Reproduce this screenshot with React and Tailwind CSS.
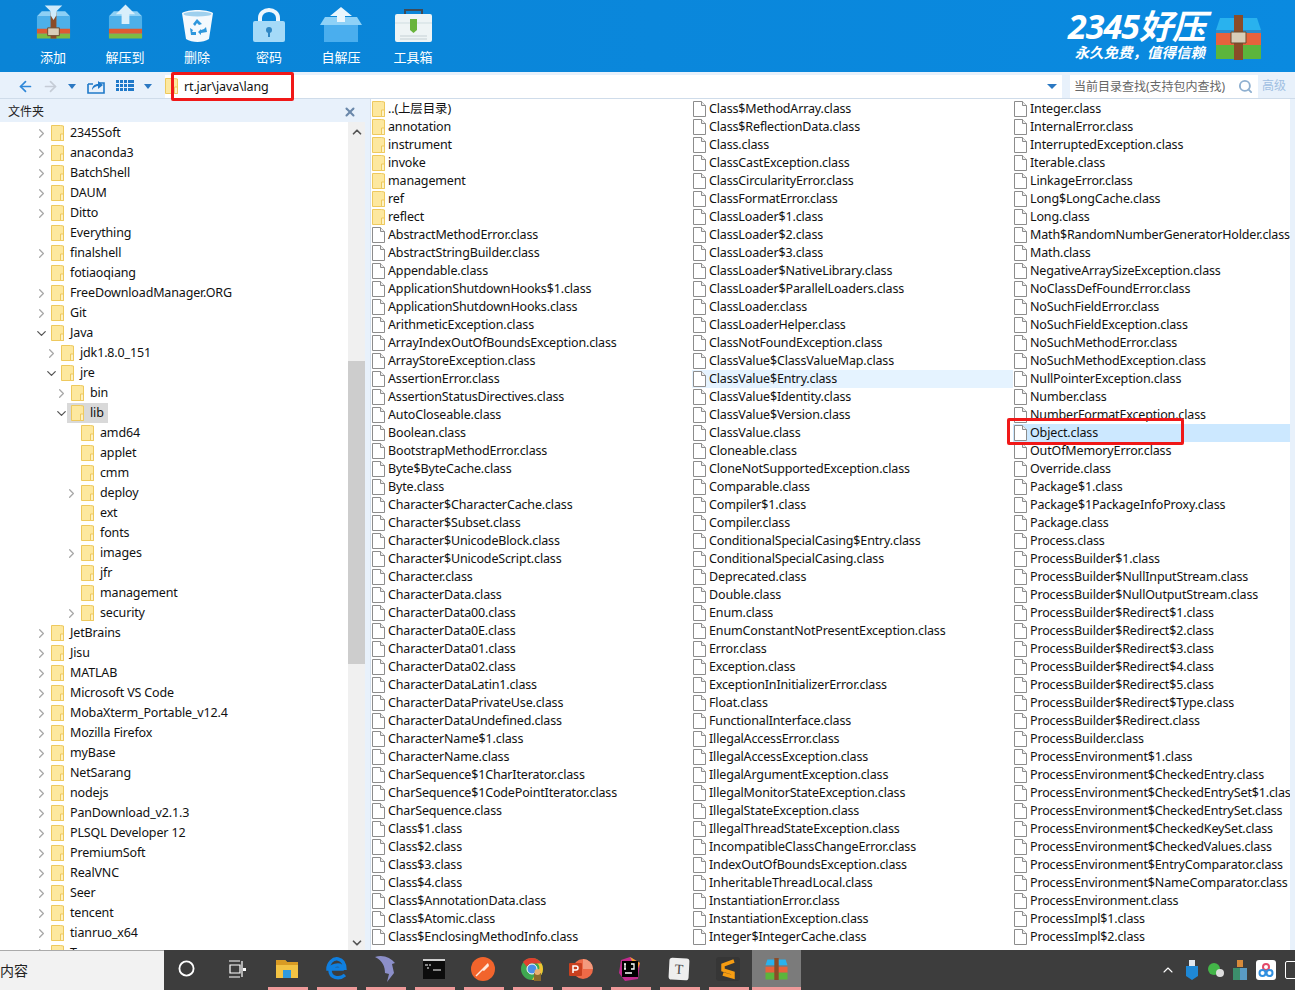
import React from 'react';
import { ChevronRight, ChevronDown, ChevronUp, X, Search, ArrowLeft, ArrowRight, Circle } from 'lucide-react';

const tree = [
  ['2345Soft', 0, 'r'], ['anaconda3', 0, 'r'], ['BatchShell', 0, 'r'], ['DAUM', 0, 'r'], ['Ditto', 0, 'r'],
  ['Everything', 0, ''], ['finalshell', 0, 'r'], ['fotiaoqiang', 0, ''], ['FreeDownloadManager.ORG', 0, 'r'],
  ['Git', 0, 'r'], ['Java', 0, 'd'], ['jdk1.8.0_151', 1, 'r'], ['jre', 1, 'd'], ['bin', 2, 'r'], ['lib', 2, 'd'],
  ['amd64', 3, ''], ['applet', 3, ''], ['cmm', 3, ''], ['deploy', 3, 'r'], ['ext', 3, ''], ['fonts', 3, ''],
  ['images', 3, 'r'], ['jfr', 3, ''], ['management', 3, ''], ['security', 3, 'r'], ['JetBrains', 0, 'r'],
  ['Jisu', 0, 'r'], ['MATLAB', 0, 'r'], ['Microsoft VS Code', 0, 'r'], ['MobaXterm_Portable_v12.4', 0, 'r'],
  ['Mozilla Firefox', 0, 'r'], ['myBase', 0, 'r'], ['NetSarang', 0, 'r'], ['nodejs', 0, 'r'],
  ['PanDownload_v2.1.3', 0, 'r'], ['PLSQL Developer 12', 0, 'r'], ['PremiumSoft', 0, 'r'], ['RealVNC', 0, 'r'],
  ['Seer', 0, 'r'], ['tencent', 0, 'r'], ['tianruo_x64', 0, 'r'], ['T', 0, 'r'],
];

const folders = ['..(上层目录)', 'annotation', 'instrument', 'invoke', 'management', 'ref', 'reflect'];

const col1 = [
  'AbstractMethodError.class', 'AbstractStringBuilder.class', 'Appendable.class', 'ApplicationShutdownHooks$1.class',
  'ApplicationShutdownHooks.class', 'ArithmeticException.class', 'ArrayIndexOutOfBoundsException.class',
  'ArrayStoreException.class', 'AssertionError.class', 'AssertionStatusDirectives.class', 'AutoCloseable.class',
  'Boolean.class', 'BootstrapMethodError.class', 'Byte$ByteCache.class', 'Byte.class', 'Character$CharacterCache.class',
  'Character$Subset.class', 'Character$UnicodeBlock.class', 'Character$UnicodeScript.class', 'Character.class',
  'CharacterData.class', 'CharacterData00.class', 'CharacterData0E.class', 'CharacterData01.class',
  'CharacterData02.class', 'CharacterDataLatin1.class', 'CharacterDataPrivateUse.class', 'CharacterDataUndefined.class',
  'CharacterName$1.class', 'CharacterName.class', 'CharSequence$1CharIterator.class',
  'CharSequence$1CodePointIterator.class', 'CharSequence.class', 'Class$1.class', 'Class$2.class', 'Class$3.class',
  'Class$4.class', 'Class$AnnotationData.class', 'Class$Atomic.class', 'Class$EnclosingMethodInfo.class',
];

const col2 = [
  'Class$MethodArray.class', 'Class$ReflectionData.class', 'Class.class', 'ClassCastException.class',
  'ClassCircularityError.class', 'ClassFormatError.class', 'ClassLoader$1.class', 'ClassLoader$2.class',
  'ClassLoader$3.class', 'ClassLoader$NativeLibrary.class', 'ClassLoader$ParallelLoaders.class', 'ClassLoader.class',
  'ClassLoaderHelper.class', 'ClassNotFoundException.class', 'ClassValue$ClassValueMap.class', 'ClassValue$Entry.class',
  'ClassValue$Identity.class', 'ClassValue$Version.class', 'ClassValue.class', 'Cloneable.class',
  'CloneNotSupportedException.class', 'Comparable.class', 'Compiler$1.class', 'Compiler.class',
  'ConditionalSpecialCasing$Entry.class', 'ConditionalSpecialCasing.class', 'Deprecated.class', 'Double.class',
  'Enum.class', 'EnumConstantNotPresentException.class', 'Error.class', 'Exception.class',
  'ExceptionInInitializerError.class', 'Float.class', 'FunctionalInterface.class', 'IllegalAccessError.class',
  'IllegalAccessException.class', 'IllegalArgumentException.class', 'IllegalMonitorStateException.class',
  'IllegalStateException.class', 'IllegalThreadStateException.class', 'IncompatibleClassChangeError.class',
  'IndexOutOfBoundsException.class', 'InheritableThreadLocal.class', 'InstantiationError.class',
  'InstantiationException.class', 'Integer$IntegerCache.class',
];

const col3 = [
  'Integer.class', 'InternalError.class', 'InterruptedException.class', 'Iterable.class', 'LinkageError.class',
  'Long$LongCache.class', 'Long.class', 'Math$RandomNumberGeneratorHolder.class', 'Math.class',
  'NegativeArraySizeException.class', 'NoClassDefFoundError.class', 'NoSuchFieldError.class',
  'NoSuchFieldException.class', 'NoSuchMethodError.class', 'NoSuchMethodException.class', 'NullPointerException.class',
  'Number.class', 'NumberFormatException.class', 'Object.class', 'OutOfMemoryError.class', 'Override.class',
  'Package$1.class', 'Package$1PackageInfoProxy.class', 'Package.class', 'Process.class', 'ProcessBuilder$1.class',
  'ProcessBuilder$NullInputStream.class', 'ProcessBuilder$NullOutputStream.class', 'ProcessBuilder$Redirect$1.class',
  'ProcessBuilder$Redirect$2.class', 'ProcessBuilder$Redirect$3.class', 'ProcessBuilder$Redirect$4.class',
  'ProcessBuilder$Redirect$5.class', 'ProcessBuilder$Redirect$Type.class', 'ProcessBuilder$Redirect.class',
  'ProcessBuilder.class', 'ProcessEnvironment$1.class', 'ProcessEnvironment$CheckedEntry.class',
  'ProcessEnvironment$CheckedEntrySet$1.class', 'ProcessEnvironment$CheckedEntrySet.class',
  'ProcessEnvironment$CheckedKeySet.class', 'ProcessEnvironment$CheckedValues.class',
  'ProcessEnvironment$EntryComparator.class', 'ProcessEnvironment$NameComparator.class', 'ProcessEnvironment.class',
  'ProcessImpl$1.class', 'ProcessImpl$2.class',
];

const treeIndent = ['pl-[34px]', 'pl-[44px]', 'pl-[54px]', 'pl-[64px]'];

function FolderIcon() {
  return (
    <svg width="13" height="16" viewBox="0 0 13 16" className="shrink-0">
      <path d="M.5.5h9l3 .5v14.500H.5z" fill="#fde89f" stroke="#eec95e" />
      <path d="M9.500 9h3v6.500h-3z" fill="#fdf1c4" stroke="#eec95e" />
    </svg>
  );
}

function FileIcon() {
  return (
    <svg width="13" height="16" viewBox="0 0 13 16" className="shrink-0">
      <path d="M.5.5h8l4 4v11H.5z" fill="#fff" stroke="#8c8c8c" />
      <path d="M8.500.5v4h4" fill="#eee" stroke="#8c8c8c" />
    </svg>
  );
}

function TreeRow({ name, depth, arrow }) {
  const selected = name === 'lib';
  return (
    <div className={`h-5 flex items-center shrink-0 ${treeIndent[depth]}`}>
      <div className="w-[17px] flex items-center shrink-0">
        {arrow === 'r' && <ChevronRight size={15} strokeWidth={2} className="text-[#a8a8a8]" />}
        {arrow === 'd' && <ChevronDown size={15} strokeWidth={2} className="text-[#555]" />}
      </div>
      <div className={`flex items-center h-5 pl-1 pr-1 -ml-1 ${selected ? 'bg-[#d9d9d9]' : ''}`}>
        <FolderIcon />
        <span className="ml-[6px] text-[#111] whitespace-nowrap">{name}</span>
      </div>
    </div>
  );
}

function ListRow({ name, folder, bg }) {
  return (
    <div className={`h-[18px] flex items-center pl-[1px] shrink-0 ${bg || ''}`}>
      <div className="w-[16px] flex items-center shrink-0">{folder ? <FolderIcon /> : <FileIcon />}</div>
      <span className="whitespace-nowrap text-[#111]">{name}</span>
    </div>
  );
}

function TopItem({ label, children }) {
  return (
    <div className="w-[72px] flex flex-col items-center">
      <div className="h-[40px] flex items-end">{children}</div>
      <span className="text-white text-[13px] tracking-normal mt-[6px] leading-[18px]">{label}</span>
    </div>
  );
}

function WrapIcon({ arrow }) {
  return (
    <svg width="37" height="38" viewBox="0 0 38 38">
      <path d="M2 12h34v21H2z" fill="#4db0ea" />
      <path d="M2 12l5-5h24l5 5z" fill="#8dd0f5" />
      <path d="M2 25h34v5H2z" fill="#dd5a32" />
      <path d="M2 30h34v5H2z" fill="#7dbb42" />
      {arrow === 'down' && <path d="M16 8h6v27h-6z" fill="#8a4c28" />}
      {arrow === 'down' && <path d="M13 24h12v8H13z" fill="#d8cdb8" stroke="#6b4a2e" />}
      {arrow === 'down' && <path d="M10 1h18l-6 6v4l-3 5-3-5V7z" fill="#cfeafa" />}
      {arrow === 'up' && <path d="M19 0l10 10h-6v10h-8V10H9z" fill="#d8effb" />}
    </svg>
  );
}

function Trash() {
  return (
    <svg width="33" height="32" viewBox="0 0 33 32">
      <path d="M1 3c6-4 25-4 31 0l-4 26c-6 4-17 4-23 0z" fill="#f4f9fd" />
      <ellipse cx="16.500" cy="4" rx="14" ry="2.500" fill="#9fd0ee" />
      <path d="M12 14l4-5 5 5-3 1-2-2-2 3zM25 17l1 5-6 1v2l-3-3 3-3v1l3-1zM9 18l3 2-1 2h4v3h-5z" fill="#2f97dc" />
    </svg>
  );
}

function Lock() {
  return (
    <svg width="32" height="34" viewBox="0 0 32 34">
      <path d="M7 14V10a9 8 0 0 1 18 0v4" fill="none" stroke="#eef7fd" strokeWidth="4" />
      <rect x="0" y="13" width="32" height="21" rx="2" fill="#a5daf8" />
      <circle cx="16" cy="22" r="3" fill="#2f87c4" />
      <path d="M15 23h2v6h-2z" fill="#2f87c4" />
    </svg>
  );
}

function BoxIcon() {
  return (
    <svg width="42" height="35" viewBox="0 0 42 35">
      <path d="M4 12h34v23H4z" fill="#4aaeee" />
      <path d="M0 18l5-8h32l5 8z" fill="#8ed1f7" />
      <path d="M21 0l11 9h-7v6h-8V9h-7z" fill="#eaf6fd" />
    </svg>
  );
}

function ToolBox() {
  return (
    <svg width="37" height="33" viewBox="0 0 37 33">
      <path d="M10 6V1h17v5" fill="none" stroke="#3e4a56" strokeWidth="2" />
      <rect x="0" y="5" width="37" height="28" rx="2" fill="#eef4f5" />
      <path d="M0 14h37" stroke="#cfdde0" />
      <path d="M15 10h7v11l-3.500 3-3.500-3z" fill="#69b43c" />
      <path d="M5 27h27M5 30h27" stroke="#c5d0d4" />
    </svg>
  );
}

function Dolphin() {
  return (
    <svg width="22" height="28" viewBox="0 0 22 28">
      <path d="M1 2c8-3 16 1 20 6l-3 1 2 9-7 9 2-8-4-1C11 12 9 6 1 2z" fill="#8c8fc9" />
    </svg>
  );
}

function TaskApp({ children, marked, active }) {
  return (
    <div className={`w-[49px] h-full flex flex-col shrink-0 ${active ? 'bg-[#7b7b7b]' : ''}`}>
      <div className="flex-1 flex items-center justify-center">{children}</div>
      <div className={`h-[3px] ${active ? '' : 'ml-[6px] mr-[3px]'} ${marked ? 'bg-[#ef9a9a]' : ''}`} />
    </div>
  );
}

export default function App() {
  return (
    <div className="relative w-[1295px] h-[990px] overflow-hidden flex flex-col bg-[#e8f1fb] text-[12.5px] tracking-[-0.15px] font-['Noto_Sans','Noto_Sans_CJK_SC',sans-serif]">
      {/* 顶部工具栏 */}
      <div className="h-[72px] shrink-0 flex items-start pt-[2px] pl-[17px] pr-[33px] bg-gradient-to-r from-[#0a84d6] to-[#0a8ae0]">
        <div className="flex">
          <TopItem label="添加"><WrapIcon arrow="down" /></TopItem>
          <TopItem label="解压到"><WrapIcon arrow="up" /></TopItem>
          <TopItem label="删除"><Trash /></TopItem>
          <TopItem label="密码"><Lock /></TopItem>
          <TopItem label="自解压"><BoxIcon /></TopItem>
          <TopItem label="工具箱"><ToolBox /></TopItem>
        </div>
        <div className="ml-auto flex items-center mt-[7px]">
          <div className="flex flex-col items-end italic font-bold text-white mr-[10px]">
            <span className="text-[34px] leading-[34px] tracking-[-1px]">2345好压</span>
            <span className="text-[14.500px] leading-[18px] tracking-normal">永久免费，值得信赖</span>
          </div>
          <svg width="47" height="47" viewBox="0 0 47 47" className="mt-[4px]">
            <path d="M5 4h37l4 12H1z" fill="#29b2ee" />
            <path d="M1 16h45v3H1z" fill="#2a8ccc" />
            <path d="M1 19h45v12H1z" fill="#e8623c" />
            <path d="M1 31h45v14H1z" fill="#5cb53c" />
            <path d="M19 1h9v45h-9z" fill="#8a4c28" />
            <path d="M16 18h15v11H16z" fill="#d8cdb8" stroke="#6b4a2e" />
          </svg>
        </div>
      </div>

      {/* 地址栏 */}
      <div className="h-[27px] shrink-0 flex items-center pt-[2px] border-b border-[#cfdcea]">
        <div className="w-[165px] flex items-center shrink-0 pl-[17px] text-[#2f87d8]">
          <ArrowLeft size={17} strokeWidth={2.4} />
          <ArrowRight size={17} strokeWidth={2.4} className="ml-[8px] text-[#c5ccd6]" />
          <div className="ml-[9px] border-x-[4px] border-t-[5px] border-x-transparent border-t-[#2b78c2]" />
          <svg width="20" height="16" viewBox="0 0 20 16" className="ml-[10px]">
            <path d="M2 6v9h16V5h-5M2 6h5" fill="none" stroke="#1f79c9" strokeWidth="1.6" />
            <path d="M6 12c0-4 3-6 6-6V3l5 4-5 4V8c-2 0-4 1-6 4z" fill="#1f79c9" />
          </svg>
          <svg width="18" height="12" viewBox="0 0 18 12" className="ml-[10px]" fill="#1f79c9">
            <path d="M0 0h3v3H0zM4 0h3v3H4zM8 0h3v3H8zM12 0h6v3h-6zM0 4h3v3H0zM4 4h3v3H4zM8 4h3v3H8zM12 4h6v3h-6zM0 8h3v3H0zM4 8h3v3H4zM8 8h3v3H8zM12 8h6v3h-6z" />
          </svg>
          <div className="ml-[10px] border-x-[4px] border-t-[5px] border-x-transparent border-t-[#2b78c2]" />
        </div>
        <div className="w-[897px] h-[23px] bg-white flex items-center shrink-0">
          <FolderIcon />
          <span className="ml-[6px] mt-[2px] text-[#111]">rt.jar\java\lang</span>
          <div className="ml-auto mr-[5px] border-x-[5px] border-t-[5px] border-x-transparent border-t-[#2b78c2]" />
        </div>
        <div className="ml-[8px] w-[188px] h-[23px] bg-white flex items-center justify-between shrink-0 pl-[4px] pr-[5px]">
          <span className="text-[#666] text-[12px] mt-[1px] tracking-normal whitespace-nowrap">当前目录查找(支持包内查找)</span>
          <Search size={15} strokeWidth={3} className="text-[#8fb0d0]" />
        </div>
        <span className="ml-[4px] text-[12px] tracking-normal text-[#a0bfe2]">高级</span>
      </div>

      {/* 主体 */}
      <div className="flex-1 min-h-0 flex">
        <div className="w-[365px] shrink-0 flex flex-col">
          <div className="h-[23px] shrink-0 flex items-center justify-between pt-[3px] pl-[8px] pr-[7px] bg-[#e8f1fb]">
            <span className="text-[#222] text-[12px] tracking-normal">文件夹</span>
            <X size={14} strokeWidth={3.500} className="text-[#6a88aa] mr-[1px]" />
          </div>
          <div className="flex-1 min-h-0 flex">
            <div className="w-[348px] bg-white overflow-hidden pt-[1px] flex flex-col">
              {tree.map(([name, depth, arrow]) => (
                <TreeRow key={name} name={name} depth={depth} arrow={arrow} />
              ))}
            </div>
            <div className="w-[17px] bg-[#f0f0f0] flex flex-col items-center">
              <ChevronUp size={14} strokeWidth={3} className="text-[#555] mt-[3px]" />
              <div className="w-full h-[303px] mt-[222px] bg-[#cdcdcd]" />
              <ChevronDown size={14} strokeWidth={3} className="text-[#555] mt-auto" />
            </div>
          </div>
        </div>
        <div className="w-[5px] shrink-0" />
        <div className="w-[920px] shrink-0 bg-white border-l border-[#d5e1ee] overflow-hidden pt-[1px] grid grid-cols-[321px_321px_277px]">
          <div className="overflow-hidden flex flex-col">
            {folders.map((f) => <ListRow key={f} name={f} folder />)}
            {col1.map((f) => <ListRow key={f} name={f} />)}
          </div>
          <div className="overflow-hidden flex flex-col">
            {col2.map((f) => (
              <ListRow key={f} name={f} bg={f === 'ClassValue$Entry.class' ? 'bg-[#e5f3ff]' : ''} />
            ))}
          </div>
          <div className="overflow-hidden flex flex-col">
            {col3.map((f) => (
              <ListRow key={f} name={f} bg={f === 'Object.class' ? 'bg-[#cce8ff]' : ''} />
            ))}
          </div>
        </div>
      </div>

      {/* 任务栏 */}
      <div className="h-10 shrink-0 flex bg-[#3d3d3d] relative">
        <div className="w-[164px] shrink-0 bg-[#f2f2f2] flex items-center text-[14px] tracking-normal text-[#222] border-t border-[#aaa]">内容</div>
        <TaskApp><Circle size={17} strokeWidth={2.6} className="text-white -translate-x-[2px]" /></TaskApp>
        <TaskApp>
          <svg width="18" height="18" viewBox="0 0 18 18" fill="none" stroke="#fff" strokeWidth="1.2" className="-translate-x-[1px]">
            <path d="M1 1h11M1 17h11M2 5h10v8H2zM14 1v16" />
            <path d="M15 8h3v3h-3z" fill="#fff" stroke="none" />
          </svg>
        </TaskApp>
        <TaskApp marked>
          <svg width="22" height="20" viewBox="0 0 22 20">
            <path d="M0 1h9l2 2h11v16H0z" fill="#f3c344" />
            <path d="M0 1h9l2 2h11v3H0z" fill="#d99b24" />
            <path d="M7 11h8v8H7z" fill="#2f9ae0" />
          </svg>
        </TaskApp>
        <TaskApp marked>
          <svg width="22" height="24" viewBox="0 0 22 24" fill="none">
            <path d="M20 18c-6 5-15 3-15-5 0-3 4-5 8-5 3 0 4 2 4 4H3C3 6 8 1 13 2c5 1 7 6 7 11" stroke="#0f7fe0" strokeWidth="3.500" />
          </svg>
        </TaskApp>
        <TaskApp marked><Dolphin /></TaskApp>
        <TaskApp marked>
          <svg width="22" height="20" viewBox="0 0 22 20">
            <path d="M0 0h22v20H0z" fill="#0c0c0c" />
            <path d="M0 0h22v2H0z" fill="#d0d0d0" />
            <path d="M2 6h3M6 6h2M4 9h2M10 11h8" stroke="#fff" />
          </svg>
        </TaskApp>
        <TaskApp marked>
          <svg width="24" height="24" viewBox="0 0 24 24">
            <circle cx="12" cy="12" r="12" fill="#f2642c" />
            <path d="M5 19L17 7" stroke="#ffe9dc" strokeWidth="1.500" />
            <path d="M11 13l6-7 1 3-5 5z" fill="#ffe9dc" />
          </svg>
        </TaskApp>
        <TaskApp marked>
          <svg width="24" height="24" viewBox="0 0 24 24">
            <circle cx="12" cy="12" r="11" fill="#3fa850" />
            <path d="M12 1a11 11 0 0 1 9.500 5.500H12A5.500 5.500 0 0 0 7 10L3 5a11 11 0 0 1 9-4z" fill="#e0402e" />
            <path d="M21.500 6.500A11 11 0 0 1 12 23l5-8a5 5 0 0 0 0-8.500z" fill="#f4c430" />
            <circle cx="12" cy="12" r="5" fill="#4a8fe8" stroke="#fff" />
            <path d="M14 16h7v8h-7z" fill="#8a6a2c" />
            <circle cx="17.500" cy="15" r="3" fill="#e8b070" />
          </svg>
        </TaskApp>
        <TaskApp marked>
          <svg width="24" height="24" viewBox="0 0 24 24">
            <circle cx="14" cy="12" r="10" fill="#ee6a47" />
            <path d="M14 2a10 10 0 0 1 10 10H14z" fill="#f39a7d" />
            <rect x="0" y="6" width="13" height="13" rx="1" fill="#c8401f" />
            <path d="M4 16V9h3a2 2 0 0 1 0 4H4" fill="none" stroke="#fff" strokeWidth="1.500" />
          </svg>
        </TaskApp>
        <TaskApp marked>
          <svg width="24" height="24" viewBox="0 0 24 24">
            <path d="M3 3l9-3 10 6-2 16-13 2-6-8z" fill="#c22a8e" />
            <path d="M12 0l10 6-3 8z" fill="#f0a030" />
            <rect x="4" y="4" width="16" height="16" fill="#000" />
            <path d="M7 7v5M6 7h2M6 12h2M13 7h3v5h-3M7 16h7" stroke="#fff" strokeWidth="1.300" fill="none" />
          </svg>
        </TaskApp>
        <TaskApp marked>
          <div className="w-[20px] h-[22px] rounded-[3px] bg-[#eeeeee] rotate-3 flex items-center justify-center text-[14px] text-[#444] font-['Liberation_Serif',serif]">T</div>
        </TaskApp>
        <TaskApp marked>
          <svg width="24" height="24" viewBox="0 0 24 24">
            <rect width="24" height="24" rx="3" fill="#363636" />
            <path d="M18 4L7 8v5l10 3v4L7 17" stroke="#f59c12" strokeWidth="3.500" fill="none" />
          </svg>
        </TaskApp>
        <TaskApp marked active>
          <svg width="23" height="24" viewBox="0 0 47 47">
            <path d="M5 4h37l4 12H1z" fill="#29b2ee" />
            <path d="M1 19h45v12H1z" fill="#e8623c" />
            <path d="M1 31h45v14H1z" fill="#5cb53c" />
            <path d="M19 1h9v45h-9z" fill="#8a4c28" />
          </svg>
        </TaskApp>
        <div className="flex-1 flex items-center justify-end gap-[9px] -mr-[10px] overflow-hidden">
          <ChevronUp size={16} strokeWidth={1.600} className="text-white" />
          <svg width="14" height="20" viewBox="0 0 14 20">
            <path d="M4 0h6v6H4z" fill="#dfe6ee" />
            <path d="M1 6h12v10l-6 4-6-4z" fill="#1e88d6" />
          </svg>
          <svg width="16" height="16" viewBox="0 0 16 16">
            <circle cx="6" cy="7" r="6" fill="#43b548" />
            <circle cx="12" cy="11" r="4" fill="#ddd" />
          </svg>
          <svg width="14" height="20" viewBox="0 0 14 20">
            <path d="M4 0h6v7H4z" fill="#d88a3a" />
            <path d="M0 8h7v12H0z" fill="#3c8f6c" />
            <path d="M7 8h7v12H7z" fill="#5a9bc4" />
          </svg>
          <svg width="20" height="20" viewBox="0 0 20 20">
            <rect width="20" height="20" rx="3" fill="#fff" />
            <circle cx="10" cy="7" r="3" fill="none" stroke="#e24a6a" strokeWidth="2" />
            <circle cx="6.500" cy="13" r="3" fill="none" stroke="#2f8fe0" strokeWidth="2" />
            <circle cx="13.500" cy="13" r="3" fill="none" stroke="#2f8fe0" strokeWidth="2" />
          </svg>
          <div className="w-[20px] h-[18px] border border-white rounded-[2px] shrink-0" />
        </div>
      </div>

      {/* 红色标注框 */}
      <div className="absolute left-[171px] top-[72px] w-[123px] h-[29px] border-[3px] border-[#f01818] rounded-[2px]" />
      <div className="absolute left-[1007px] top-[418px] w-[177px] h-[27px] border-[3px] border-[#f01818] rounded-[2px]" />
    </div>
  );
}
